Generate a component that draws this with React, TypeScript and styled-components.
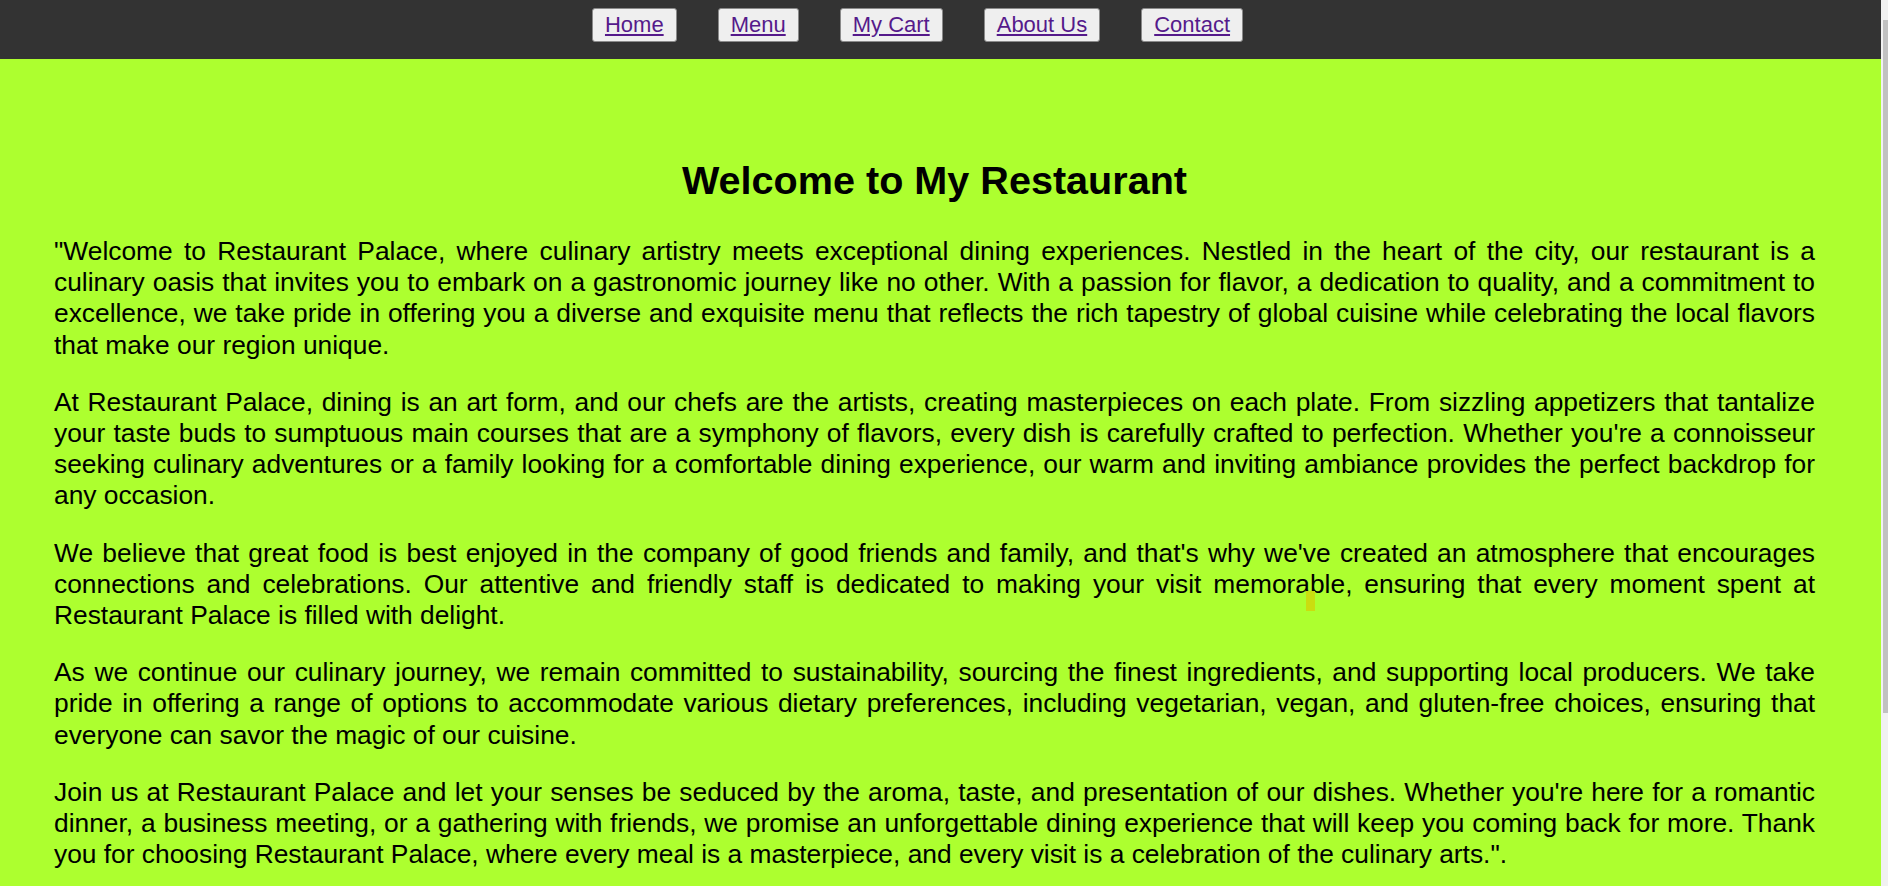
import React from "react";
import styled, { createGlobalStyle } from "styled-components";

const GlobalStyle = createGlobalStyle`
  html, body {
    margin: 0;
    padding: 0;
    height: 100%;
    overflow: hidden;
  }
  body {
    font-family: "Liberation Sans", Arial, sans-serif;
    background: #f1f1f1;
  }
  #root {
    height: 100%;
  }
`;

const Shell = styled.div`
  display: flex;
  height: 100vh;
  width: 100%;
`;

const Page = styled.div`
  flex: 1;
  display: flex;
  flex-direction: column;
  background: #adff2f;
  min-width: 0;
  overflow: hidden;
`;

const NavBar = styled.nav`
  flex-shrink: 0;
  height: 59px;
  box-sizing: border-box;
  background: #333333;
  display: flex;
  justify-content: center;
  align-items: flex-start;
  gap: 41px;
  padding: 8px 46px 0 0;
`;

const NavButton = styled.button`
  box-sizing: border-box;
  height: 34px;
  padding: 2px 12px 3px;
  background: #efefef;
  border: 1px solid #8a8a8a;
  border-radius: 3px;
  font-family: "Liberation Sans", Arial, sans-serif;
  font-size: 22px;
  line-height: 27px;
  cursor: pointer;
`;

const NavLink = styled.a`
  color: #551a8b;
  text-decoration: underline;
`;

const Main = styled.main`
  flex-shrink: 0;
  position: relative;
  padding: 98px 66px 0 54px;
  color: #000;
`;

const Title = styled.h1`
  margin: 0 0 33px;
  text-align: center;
  font-size: 39.6px;
  font-weight: bold;
  line-height: 46px;
`;

const Paragraph = styled.p`
  margin: 0 0 26px;
  font-size: 26.35px;
  line-height: 31.2px;
  text-align: justify;
`;

const Marker = styled.span`
  position: absolute;
  left: 1306px;
  top: 532px;
  width: 9px;
  height: 20px;
  background: #cadd10;
`;

const ScrollTrack = styled.div`
  width: 7px;
  background: #f1f1f1;
  display: flex;
  flex-direction: column;
  padding-top: 20px;
  padding-left: 2px;
  box-sizing: border-box;
`;

const ScrollThumb = styled.div`
  height: 693px;
  background: #c1c1c1;
`;

const links = ["Home", "Menu", "My Cart", "About Us", "Contact"];

const paragraphs = [
  "\"Welcome to Restaurant Palace, where culinary artistry meets exceptional dining experiences. Nestled in the heart of the city, our restaurant is a culinary oasis that invites you to embark on a gastronomic journey like no other. With a passion for flavor, a dedication to quality, and a commitment to excellence, we take pride in offering you a diverse and exquisite menu that reflects the rich tapestry of global cuisine while celebrating the local flavors that make our region unique.",
  "At Restaurant Palace, dining is an art form, and our chefs are the artists, creating masterpieces on each plate. From sizzling appetizers that tantalize your taste buds to sumptuous main courses that are a symphony of flavors, every dish is carefully crafted to perfection. Whether you're a connoisseur seeking culinary adventures or a family looking for a comfortable dining experience, our warm and inviting ambiance provides the perfect backdrop for any occasion.",
  "We believe that great food is best enjoyed in the company of good friends and family, and that's why we've created an atmosphere that encourages connections and celebrations. Our attentive and friendly staff is dedicated to making your visit memorable, ensuring that every moment spent at Restaurant Palace is filled with delight.",
  "As we continue our culinary journey, we remain committed to sustainability, sourcing the finest ingredients, and supporting local producers. We take pride in offering a range of options to accommodate various dietary preferences, including vegetarian, vegan, and gluten-free choices, ensuring that everyone can savor the magic of our cuisine.",
  "Join us at Restaurant Palace and let your senses be seduced by the aroma, taste, and presentation of our dishes. Whether you're here for a romantic dinner, a business meeting, or a gathering with friends, we promise an unforgettable dining experience that will keep you coming back for more. Thank you for choosing Restaurant Palace, where every meal is a masterpiece, and every visit is a celebration of the culinary arts.\".",
];

export default function App() {
  return (
    <>
      <GlobalStyle />
      <Shell>
        <Page>
          <NavBar>
            {links.map((l) => (
              <NavButton key={l}>
                <NavLink href="#">{l}</NavLink>
              </NavButton>
            ))}
          </NavBar>
          <Main>
            <Title>Welcome to My Restaurant</Title>
            {paragraphs.map((p, i) => (
              <Paragraph key={i}>{p}</Paragraph>
            ))}
            <Marker />
          </Main>
        </Page>
        <ScrollTrack>
          <ScrollThumb />
        </ScrollTrack>
      </Shell>
    </>
  );
}
